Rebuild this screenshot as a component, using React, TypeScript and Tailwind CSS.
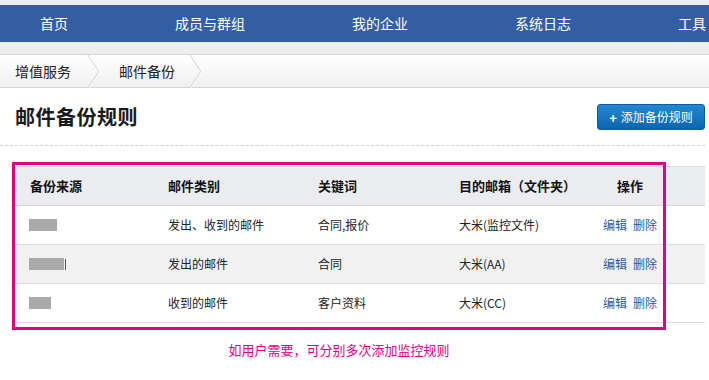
import React from "react";

const font = { fontFamily: '"Noto Sans CJK SC", "Liberation Sans", sans-serif' };

function Chevron() {
  return (
    <svg width="14" height="33" viewBox="0 0 14 33" className="shrink-0">
      <polyline points="1,0 12,16.5 1,33" fill="none" stroke="#c9c9c9" strokeWidth="1" />
      <polyline points="2,0 13,16.5 2,33" fill="none" stroke="#ffffff" strokeWidth="1" />
    </svg>
  );
}

const rows = [
  { src: 28, tail: false, type: "发出、收到的邮件", kw: "合同,报价", box: "大米(监控文件)", bg: "bg-white" },
  { src: 35, tail: true, type: "发出的邮件", kw: "合同", box: "大米(AA)", bg: "bg-[#f1f1f1]" },
  { src: 22, tail: false, type: "收到的邮件", kw: "客户资料", box: "大米(CC)", bg: "bg-white" },
];

export default function App() {
  return (
    <div className="relative w-[709px] h-[380px] bg-white overflow-hidden text-[#222]" style={font}>
      <div className="h-[5px] bg-[#efefef]" />
      <div className="h-[37px] bg-[#335ea3] flex items-center pl-[40px] gap-[107px] text-[14px] text-white whitespace-nowrap">
        <span>首页</span>
        <span>成员与群组</span>
        <span>我的企业</span>
        <span>系统日志</span>
        <span>工具</span>
      </div>
      <div className="h-[12px] bg-[#eeeeee]" />
      <div className="h-[34px] border-t border-b border-[#d6d6d6] bg-gradient-to-b from-white to-[#efefef] flex items-center pl-[15px] text-[14px] text-[#222]">
        <span>增值服务</span>
        <div className="ml-[16px] mr-[18px]"><Chevron /></div>
        <span>邮件备份</span>
        <div className="ml-[14px]"><Chevron /></div>
      </div>

      <div className="w-[705px] h-[58px] border-b border-dashed border-[#d0d0d0] flex items-center justify-between pl-[15px]">
        <h1 className="text-[20px] font-bold text-[#1a1a1a] tracking-[0.5px]">邮件备份规则</h1>
        <button className="h-[26px] w-[108px] rounded-[3px] border border-[#0b5e9f] bg-gradient-to-b from-[#2289d2] to-[#0b65ad] text-white text-[12px] flex items-center justify-center gap-[4px] mt-[1px]">
          <span className="font-bold text-[13px] leading-none">+</span>
          <span>添加备份规则</span>
        </button>
      </div>

      <div className="ml-[15px] mt-[20px] w-[690px] text-[12px]">
        <div className="flex items-center h-[40px] bg-[#ebecf0] border-t border-b border-[#d9d9d9] font-bold text-[13px] text-[#111]">
          <div className="w-[138px] pl-[15px]">备份来源</div>
          <div className="w-[150px] pl-[15px]">邮件类别</div>
          <div className="w-[141px] pl-[15px]">关键词</div>
          <div className="w-[146px] pl-[15px]">目的邮箱（文件夹）</div>
          <div className="w-[80px] text-center">操作</div>
        </div>
        {rows.map((r, i) => (
          <div key={i} className={`flex items-center h-[39px] border-b border-[#dddddd] ${r.bg}`}>
            <div className="w-[138px] pl-[14px] flex items-center">
              <div className="h-[12px] bg-[#a9a9a9]" style={{ width: r.src }} />
              {r.tail && <div className="w-[1px] h-[11px] bg-[#555] ml-[1px]" />}
            </div>
            <div className="w-[150px] pl-[15px]">{r.type}</div>
            <div className="w-[141px] pl-[15px]">{r.kw}</div>
            <div className="w-[146px] pl-[15px]">{r.box}</div>
            <div className="w-[80px] flex justify-center gap-[6px] text-[#2b5d9b]">
              <span>编辑</span>
              <span>删除</span>
            </div>
          </div>
        ))}
      </div>

      <div className="absolute left-[12px] top-[162px] w-[654px] h-[168px] border-[3px] border-[#e5007f]" />
      <div className="absolute left-[12px] top-[340px] w-[654px] text-center text-[13px] text-[#e5007f]">
        如用户需要，可分别多次添加监控规则
      </div>
    </div>
  );
}
